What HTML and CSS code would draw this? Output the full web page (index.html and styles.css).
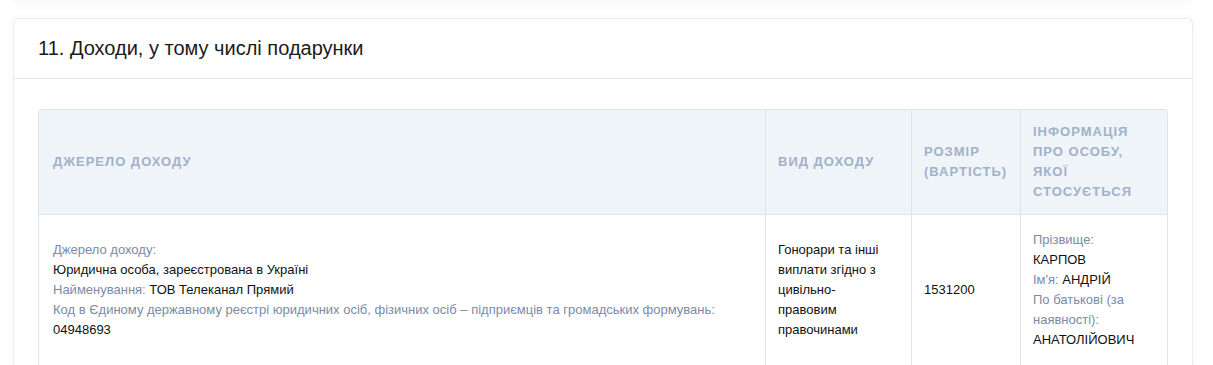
FILE: index.html
```html
<!DOCTYPE html>
<html lang="uk">
<head>
  <meta charset="UTF-8">
  <title>Доходи</title>
  <link rel="stylesheet" href="styles.css">
</head>
<body>
  <div class="prev-card"></div>

  <div class="card">
    <div class="card-header">
      <h2>11. Доходи, у тому числі подарунки</h2>
    </div>
    <div class="card-body">
      <table class="income-table">
        <thead>
          <tr>
            <th class="col-source">Джерело доходу</th>
            <th class="col-type">Вид доходу</th>
            <th class="col-size">Розмір (вартість)</th>
            <th class="col-person">Інформація про особу, якої стосується</th>
          </tr>
        </thead>
        <tbody>
          <tr>
            <td class="col-source">
              <span class="label">Джерело доходу:</span><br>
              Юридична особа, зареєстрована в Україні<br>
              <span class="label">Найменування:</span> ТОВ Телеканал Прямий<br>
              <span class="label">Код в Єдиному державному реєстрі юридичних осіб, фізичних осіб – підприємців та громадських формувань:</span><br>
              04948693
            </td>
            <td>Гонорари та інші виплати згідно з цивільно-правовим правочинами</td>
            <td>1531200</td>
            <td>
              <span class="label">Прізвище:</span><br>
              КАРПОВ<br>
              <span class="label">Ім'я:</span> АНДРІЙ<br>
              <span class="label">По батькові (за наявності):</span><br>
              АНАТОЛІЙОВИЧ
            </td>
          </tr>
        </tbody>
      </table>
    </div>
  </div>
</body>
</html>
```

FILE: styles.css
```css
body {
  font-family: 'Liberation Sans', Arial, sans-serif;
  background-color: #ffffff;
  color: #111;
  margin: 0;
  padding: 0;
}
.prev-card {
  height: 10px;
  margin: -10px 20px 0 13px;
  background-color: #fff;
  border-radius: 0 0 6px 6px;
  box-shadow: 0 2px 10px rgba(40, 60, 90, 0.06);
}
.card {
  margin: 18px 20px 0 13px;
  background-color: #fff;
  border: 1px solid #e9edf2;
  border-bottom: none;
  border-radius: 6px 6px 0 0;
  box-shadow: 0 0 10px rgba(40, 60, 90, 0.05);
}
.card-header {
  height: 59px;
  border-bottom: 1px solid #e2e5e9;
  display: flex;
  align-items: center;
  padding: 0 24px;
}
.card-header h2 {
  margin: 0;
  font-size: 20px;
  font-weight: normal;
  color: #1b1b1b;
}
.card-body {
  padding: 30px 24px 0;
}
.income-table {
  width: 100%;
  border-collapse: separate;
  border-spacing: 0;
  table-layout: fixed;
  border: 1px solid #dfe4ea;
  border-bottom: none;
  border-radius: 4px 4px 0 0;
}
.income-table th {
  background-color: #eff4f8;
  color: #a2b1ca;
  font-size: 13px;
  font-weight: bold;
  text-transform: uppercase;
  letter-spacing: 1px;
  line-height: 20px;
  text-align: left;
  padding: 12px;
  border-left: 1px solid #dfe4ea;
  border-bottom: 1px solid #dfe4ea;
}
.income-table th:first-child {
  border-top-left-radius: 4px;
}
.income-table th:last-child {
  border-top-right-radius: 4px;
}
.income-table td {
  font-size: 13px;
  line-height: 20px;
  vertical-align: middle;
  padding: 15px 20px 15px 12px;
  border-left: 1px solid #dfe4ea;
  border-bottom: 1px solid #dfe4ea;
}
.income-table th:first-child,
.income-table td:first-child {
  border-left: none;
  padding-left: 14px;
}
.col-source { width: auto; }
.col-type { width: 121px; }
.col-size { width: 84px; }
.col-person { width: 122px; }
.label {
  color: #7b8ba7;
}
```
